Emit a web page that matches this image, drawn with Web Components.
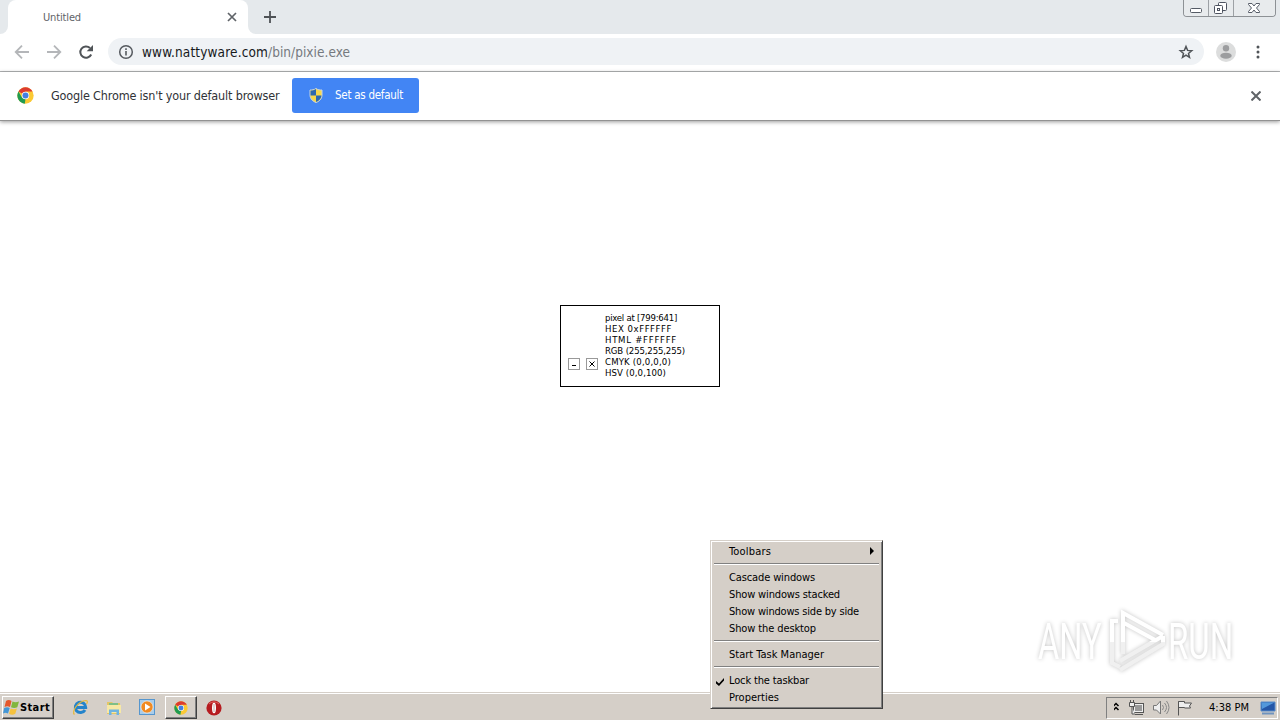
<!DOCTYPE html>
<html lang="en">
<head>
<meta charset="utf-8">
<title>Untitled</title>
<style>
    html, body { margin: 0; width: 1280px; height: 720px; overflow: hidden; background: #fff; }
    body { font-family: "DejaVu Sans Condensed", "DejaVu Sans", sans-serif; font-stretch: condensed; font-size: 11px; color: #000; }
    pixie-window { position: absolute; left: 560px; top: 305px; }
    context-menu { position: absolute; left: 710px; top: 540px; }
    any-run-mark { position: absolute; left: 1030px; top: 604px; }
</style>
</head>
<body>
<desk-top>
    <tab-strip><fit-text w="38">Untitled</fit-text></tab-strip>
    <tool-bar>
        <fit-text w="126" slot="host">www.nattyware.com</fit-text>
        <fit-text w="82" slot="path">/bin/pixie.exe</fit-text>
    </tool-bar>
    <info-bar>
        <fit-text w="228.5">Google Chrome isn't your default browser</fit-text>
        <fit-text w="68" slot="action">Set as default</fit-text>
    </info-bar>
    <page-view></page-view>
    <task-bar>
        <fit-text w="30" slot="start">Start</fit-text>
        <fit-text w="40" slot="clock">4:38 PM</fit-text>
    </task-bar>
</desk-top>
<pixie-window>
    <fit-text w="72">pixel at [799:641]</fit-text>
    <fit-text w="67">HEX 0xFFFFFF</fit-text>
    <fit-text w="72">HTML #FFFFFF</fit-text>
    <fit-text w="80">RGB (255,255,255)</fit-text>
    <fit-text w="66">CMYK (0,0,0,0)</fit-text>
    <fit-text w="61">HSV (0,0,100)</fit-text>
</pixie-window>
<any-run-mark></any-run-mark>
<context-menu>
    <menu-item submenu><fit-text w="42">Toolbars</fit-text></menu-item>
    <menu-line></menu-line>
    <menu-item><fit-text w="86">Cascade windows</fit-text></menu-item>
    <menu-item><fit-text w="111">Show windows stacked</fit-text></menu-item>
    <menu-item><fit-text w="130">Show windows side by side</fit-text></menu-item>
    <menu-item><fit-text w="87">Show the desktop</fit-text></menu-item>
    <menu-line></menu-line>
    <menu-item><fit-text w="95">Start Task Manager</fit-text></menu-item>
    <menu-line></menu-line>
    <menu-item checked><fit-text w="80">Lock the taskbar</fit-text></menu-item>
    <menu-item><fit-text w="50">Properties</fit-text></menu-item>
</context-menu>

<script>
// Every element here only needs a shadow root filled with its own markup
class Base extends HTMLElement {
    constructor() {
        super();
        const shadowRoot = this.attachShadow({mode: 'open'});
        shadowRoot.innerHTML = `<style>svg { display: block; flex: none; }</style>` + this.template();
    }
}

// Spreads its letters so the label takes exactly w pixels
class FitText extends Base {
    template() {
        return `<style>:host { display: inline-block; white-space: pre; flex: none; }</style><slot></slot>`;
    }
    connectedCallback() {
        const want = Number(this.getAttribute('w'));
        const count = this.textContent.length;
        const now = this.getBoundingClientRect().width;
        this.style.letterSpacing = ((want - now) / count) + 'px';
    }
}

class DeskTop extends Base {
    template() {
        return `
        <style>:host { display: flex; flex-direction: column; width: 1280px; height: 720px; background: #fff; }</style>
        <slot></slot>`;
    }
}

class ChromeLogo extends Base {
    template() {
        return `
        <style>:host { display: block; flex: none; width: 17px; height: 17px; }</style>
        <svg width="100%" height="100%" viewBox="0 0 48 48">
            <circle cx="24" cy="24" r="23" fill="#fbc934"/>
            <path d="M24 24L4.1 12.5A23 23 0 0 1 43.9 12.5H24z" fill="#dc3b30"/>
            <path d="M4.1 12.5L14 29.8L24 34L22 47A23 23 0 0 1 4.1 12.5z" fill="#209b51"/>
            <circle cx="24" cy="24" r="10.500" fill="#fff"/>
            <circle cx="24" cy="24" r="8.500" fill="#437fe0"/>
        </svg>`;
    }
}

class TabStrip extends Base {
    template() {
        return `
        <style>
            :host { display: flex; height: 34px; background: #e5e9ec; color: #5f6368; }
            .foot { width: 8px; background: #fff; }
            .foot i { display: block; height: 34px; background: #e5e9ec; }
            .left i { border-bottom-right-radius: 8px; }
            .right i { border-bottom-left-radius: 8px; }
            .tab { box-sizing: border-box; display: flex; align-items: center; width: 240px; padding: 0 11px 0 35px; background: #fff; border-radius: 8px 8px 0 0; justify-content: space-between; }
            .plus { margin: 10px 0 0 7px; }
            .caption { display: grid; grid-template-columns: 25px 25px 41px; box-sizing: border-box; width: 93px; height: 17px; margin: 0 4px 0 auto; border: 1px solid #8d9195; border-top: 0; border-radius: 0 0 4px 4px; overflow: hidden; }
            .caption span { display: flex; justify-content: center; border-right: 1px solid #9da1a5; background: #e8ebed; }
            .caption span:last-child { border: 0; }
        </style>
        <div class="foot left"><i></i></div>
        <div class="tab">
            <slot></slot>
            <svg width="10" height="10" viewBox="0 0 10 10" stroke="#5f6368" stroke-width="1.7"><path d="M1 1l8 8M9 1l-8 8"/></svg>
        </div>
        <div class="foot right"><i></i></div>
        <svg class="plus" width="14" height="14" viewBox="0 0 14 14" stroke="#4e5256" stroke-width="1.8"><path d="M7 1v12M1 7h12"/></svg>
        <div class="caption">
            <span><svg width="24" height="16" fill="#fff" stroke="#555b65"><rect x="6.5" y="8.5" width="11" height="4" rx="1"/></svg></span>
            <span><svg width="24" height="16" fill="#fff" stroke="#4d5360"><rect x="9.5" y="2.5" width="8" height="8" rx="1"/><rect x="5.5" y="5.5" width="8" height="8" rx="1"/><rect x="8.5" y="8.5" width="2" height="2"/></svg></span>
            <span><svg width="41" height="16" viewBox="0 0 41 16" fill="#fff" stroke="#575d68"><path d="M14.500 3.500h3.500l2 2.500 2-2.500h3.500v1l-3 3.500 3 3.500v1H22l-2-2.500-2 2.500h-3.500v-1l3-3.500-3-3.500z"/></svg></span>
        </div>`;
    }
}

class ToolBar extends Base {
    template() {
        return `
        <style>
            :host { box-sizing: border-box; display: flex; align-items: center; height: 38px; padding: 0 15px 2px 14px; background: #fff; border-bottom: 1px solid #b3b5b7; font-size: 13.500px; }
            .nav { margin-right: 16px; }
            .reload { margin-right: 14px; }
            .address { box-sizing: border-box; display: flex; align-items: center; width: 1096px; height: 27px; padding: 0 10px; border-radius: 14px; background: #eff2f5; color: #16191c; }
            .info { margin-right: 8px; }
            .path { color: #75797e; }
            .star { margin-left: auto; }
            .face { margin: 0 20px 0 12px; }
        </style>
        <svg class="nav" width="16" height="16" viewBox="0 0 16 16" fill="none" stroke="#b4b6b9" stroke-width="1.800"><path d="M15 8H2M8 1.700L1.700 8 8 14.300"/></svg>
        <svg class="nav" width="16" height="16" viewBox="0 0 16 16" fill="none" stroke="#b4b6b9" stroke-width="1.800"><path d="M1 8h13M8 1.700L14.300 8 8 14.300"/></svg>
        <svg class="reload" width="16" height="16" viewBox="0 0 16 16"><path d="M13.200 10.500A5.700 5.700 0 1 1 12 4" fill="none" stroke="#505458" stroke-width="2"/><path d="M15 1v6.300H8.700z" fill="#505458"/></svg>
        <div class="address">
            <svg class="info" width="16" height="16" viewBox="0 0 16 16"><circle cx="8" cy="8" r="6.300" fill="none" stroke="#565a5f" stroke-width="1.500"/><path d="M7.200 7h1.600v4.500H7.200zM7.200 4.300h1.600v1.600H7.200z" fill="#565a5f"/></svg>
            <slot name="host"></slot><span class="path"><slot name="path"></slot></span>
            <svg class="star" width="16" height="16" viewBox="0 0 16 16"><path d="M8 2.500l1.600 3.900 4.100.3-3.200 2.700 1 4L8 11.200l-3.500 2.200 1-4-3.200-2.700 4.100-.3z" fill="none" stroke="#505458" stroke-width="1.500"/></svg>
        </div>
        <svg class="face" width="20" height="20" viewBox="0 0 20 20"><circle cx="10" cy="10" r="10" fill="#dcdddd"/><circle cx="10" cy="6.200" r="3.200" fill="#9c9d9f"/><ellipse cx="10" cy="13.700" rx="5.700" ry="3" fill="#9c9d9f"/></svg>
        <svg width="4" height="16" viewBox="0 0 4 16" fill="#505458"><circle cx="2" cy="3" r="1.500"/><circle cx="2" cy="8" r="1.500"/><circle cx="2" cy="13" r="1.500"/></svg>`;
    }
}

class InfoBar extends Base {
    template() {
        return `
        <style>
            :host { box-sizing: border-box; display: flex; align-items: center; height: 49px; padding: 0 19px 1px 17px; background: #fff; border-bottom: 1px solid #929292; box-shadow: 0 1px 4px rgba(0,0,0,.4); color: #303236; font-size: 12.500px; z-index: 1; }
            chrome-logo { margin-right: 17px; }
            .button { box-sizing: border-box; display: flex; align-items: center; width: 127px; height: 35px; margin-left: 12.500px; padding-left: 17px; padding-bottom: 1px; background: #4285f4; border-radius: 3px; color: #fff; font-size: 11.500px; }
            .shield { margin: 1px 12px 0 0; }
            .close { margin-left: auto; }
        </style>
        <chrome-logo></chrome-logo>
        <slot></slot>
        <div class="button">
            <svg class="shield" width="14" height="15" viewBox="0 0 14 15">
                <path d="M7 .5C5 2 3 2 1 2v5c0 4 3 6.500 6 7.500 3-1 6-3.500 6-7.500V2c-2 0-4 0-6-1.500z" fill="#f7d84b" stroke="#c6d5e2"/>
                <path d="M7 1C5 2.300 3.500 2.500 1.500 2.500V7.500H7zM7 7.500h5.500c-.3 3.300-2.600 5.300-5.500 6.500z" fill="#2e69ae"/>
            </svg>
            <slot name="action"></slot>
        </div>
        <svg class="close" width="10" height="10" viewBox="0 0 10 10" stroke="#606468" stroke-width="2"><path d="M.5.5l9 9M9.500.5l-9 9"/></svg>`;
    }
}

class PageView extends Base {
    template() {
        return `<style>:host { display: block; flex: 1; background: #fff; }</style>`;
    }
}

class PixieWindow extends Base {
    template() {
        return `
        <style>
            :host { box-sizing: border-box; display: flex; width: 160px; height: 82px; border: 1px solid #000; background: #fff; font-size: 9.500px; line-height: 11px; }
            .buttons { display: flex; gap: 6px; padding: 52px 7px 0 7px; }
            .lines { display: flex; flex-direction: column; align-items: flex-start; padding-top: 6px; }
        </style>
        <div class="buttons">
            <svg width="12" height="12" fill="none" stroke="#999"><rect x=".5" y=".5" width="11" height="11"/><path d="M4 7.500h4" stroke="#000"/></svg>
            <svg width="12" height="12" fill="none" stroke="#999"><rect x=".5" y=".5" width="11" height="11"/><path d="M3.500 3.500l5 5M8.500 3.500l-5 5" stroke="#000"/></svg>
        </div>
        <div class="lines"><slot></slot></div>`;
    }
}

class ContextMenu extends Base {
    template() {
        return `
        <style>
            :host { box-sizing: border-box; display: flex; flex-direction: column; width: 173px; height: 169px; padding: 1px; background: #d5cfc8; border: 1px solid; border-color: #d5cfc8 #404040 #404040 #d5cfc8; box-shadow: inset 1px 1px #fff, inset -1px -1px #808080; }
            div { display: flex; flex-direction: column; padding: 1px; }
        </style>
        <div><slot></slot></div>`;
    }
}

class MenuItem extends Base {
    template() {
        return `
        <style>
            :host { display: flex; align-items: center; height: 17px; padding-right: 6px; line-height: 17px; }
            .gutter { width: 16px; flex: none; }
            .gutter svg, .arrow { visibility: hidden; }
            :host([checked]) .gutter svg, :host([submenu]) .arrow { visibility: visible; }
            .gutter svg { margin: 2px 0 0 3px; }
            .arrow { margin: 0 0 2px auto; }
        </style>
        <span class="gutter"><svg width="8" height="8"><path d="M0 3l3 2.500L8 0v2.500L3 8 0 5.500z"/></svg></span>
        <slot></slot>
        <svg class="arrow" width="4" height="8"><path d="M0 0l4 4-4 4z"/></svg>`;
    }
}

class MenuLine extends Base {
    template() {
        return `
        <style>
            :host { display: block; height: 9px; }
            i { display: block; height: 1px; border-top: 1px solid #808080; background: #fff; margin: 0 1px; transform: translateY(3px); }
        </style>
        <i></i>`;
    }
}

class TaskBar extends Base {
    template() {
        return `
        <style>
            :host { box-sizing: border-box; display: flex; align-items: center; height: 28px; padding: 2px 2px 0; background: #d5cfc8; border-top: 1px solid #d5cfc8; box-shadow: inset 0 1px #fff; }
            .raised { box-sizing: border-box; display: flex; align-items: center; height: 23px; border: 1px solid; border-color: #fff #404040 #404040 #fff; box-shadow: inset -1px -1px #808080; }
            .start { width: 52px; font-weight: bold; }
            .quick { display: flex; align-items: center; gap: 17px; margin: 0 9px 0 18px; }
            .app { width: 32px; justify-content: center; margin-right: 9px; }
            chrome-logo { width: 14px; height: 14px; }
            .tray { box-sizing: border-box; display: flex; align-items: center; width: 172px; height: 22px; margin-left: auto; padding: 0 1px 0 7px; border: 1px solid; border-color: #808080 #fff #fff #808080; }
            .status { margin-right: -7px; }
            .display { margin-left: auto; }
        </style>
        <div class="raised start">
            <svg width="17" height="17" viewBox="0 0 17 17">
                <path d="M3 2c2-1.500 4-1 5.500 0L7 8C5 7 3.500 7 1.500 8z" fill="#e4572c"/>
                <path d="M9.500 2.500c2 1 4 1 6.500 0l-1.700 5.700c-2 1-4.300 1-6.300 0z" fill="#81b63e"/>
                <path d="M1.200 9c2-1 3.800-1 5.500 0L5 14.500c-2-1-3.500-1-5 0z" fill="#4396d6"/>
                <path d="M7.700 9.500c2 1 4 1 6.200 0l-1.600 5.300c-2 1.200-4.300 1.200-6.300 0z" fill="#f6c23d"/>
            </svg>
            <slot name="start"></slot>
        </div>
        <div class="quick">
            <svg width="17" height="17" viewBox="0 0 17 17" fill="none">
                <path d="M13 11A5.200 5.200 0 1 1 13.700 8.500H4.500" stroke="#2484cb" stroke-width="3"/>
                <path d="M2.500 15.500C-1 13 6 2 14 1.500c2 0 1.500 2 .5 3.500" stroke="#e5b93c" stroke-width="1.200"/>
            </svg>
            <svg width="16" height="16" viewBox="0 0 16 16">
                <path d="M1 2h5l1 1h7v11H1z" fill="#e4c566"/><path d="M3 3h9v3H3z" fill="#7fbf86"/><path d="M1 5h14v8H1z" fill="#f7e8a5"/>
                <path d="M3 15V9.500h10V15h-2.500v-3h-5v3z" fill="#70b4e0"/>
            </svg>
            <svg width="17" height="17" viewBox="0 0 17 17">
                <rect x=".5" y=".5" width="15" height="15" fill="#a9cdea" stroke="#5696ce"/><circle cx="8" cy="8" r="6" fill="#f08a22" stroke="#fff" stroke-width=".5"/><path d="M6 4.500v7L11.500 8z" fill="#fff"/>
            </svg>
        </div>
        <div class="raised app"><chrome-logo></chrome-logo></div>
        <svg width="16" height="16" viewBox="0 0 16 16"><circle cx="8" cy="8" r="7.600" fill="#b61c20"/><path d="M3 4a7 7 0 0 1 10 0" stroke="#e46a64" fill="none"/><ellipse cx="8" cy="8" rx="2" ry="5.300" fill="#fff"/><path d="M8 4v8" stroke="#c6aaa5"/></svg>
        <div class="tray">
            <svg class="status" width="102" height="20" viewBox="0 0 102 20">
                <path d="M-.5 8L2 5.500 4.500 8M-.5 12L2 9.500 4.500 12" fill="none" stroke="#000" stroke-width="1.500"/>
                <g fill="#eee" stroke="#555">
                    <rect x="19.500" y="5.500" width="10" height="9"/><path d="M21 16.500h8" fill="none"/><path d="M21 7h7v6h-7z" fill="#999" stroke="none"/>
                    <path d="M15.500 4.500h5v4h-5zM16.500 2v2M19.500 2v2M18 9v7h3"/>
                    <path d="M39.500 7.500h3l4-4.500v13l-4-4h-3z" stroke="#777"/>
                    <path d="M48.500 7q2 2.500 0 5M50.500 5q4 4.500 0 9M52.500 3q5 6.500 0 13" fill="none" stroke="#888"/>
                    <path d="M64.500 3.500v14M64.500 3.500h6v1.500h7l-2 3 1 2h-6V9.500h-6z"/>
                </g>
            </svg>
            <slot name="clock"></slot>
            <svg class="display" width="16" height="15" viewBox="0 0 16 15"><path d="M1 2h14v9H1z" fill="#2456a7" stroke="#588bc8"/><path d="M1.500 2.500h13L2 9z" fill="#5398db"/><path d="M2 13.500h12" stroke="#6f93be" stroke-width="2"/></svg>
        </div>`;
    }
}

class AnyRunMark extends Base {
    template() {
        return `
        <style>
            :host { display: block; width: 230px; height: 76px; }
            svg { filter: drop-shadow(0 0 2px rgba(0,0,0,.24)); }
            text { font-family: Roboto, sans-serif; font-size: 50px; font-weight: 400; font-stretch: normal; }
        </style>
        <svg width="230" height="76" viewBox="0 0 230 76">
            <defs>
                <linearGradient id="g" x1="0" y1="18" x2="0" y2="56" gradientUnits="userSpaceOnUse">
                    <stop offset=".52" stop-color="#fff"/><stop offset=".54" stop-color="#f0f0f0"/>
                </linearGradient>
            </defs>
            <g fill="url(#g)">
                <text transform="translate(8 55) scale(.65 1)">ANY</text>
                <text transform="translate(138 55) scale(.66 1)">RUN</text>
            </g>
            <g fill="none" stroke="url(#g)" stroke-width="4">
                <path d="M93 50V9l40 22M88 17h-6v42l8 4"/>
                <path d="M94 19l33 18M90 57l43-25M90 66l43-26v-8"/>
            </g>
        </svg>`;
    }
}

// Containers first, labels last, so a label is measured with its final font
customElements.define('desk-top', DeskTop);
customElements.define('chrome-logo', ChromeLogo);
customElements.define('tab-strip', TabStrip);
customElements.define('tool-bar', ToolBar);
customElements.define('info-bar', InfoBar);
customElements.define('page-view', PageView);
customElements.define('pixie-window', PixieWindow);
customElements.define('context-menu', ContextMenu);
customElements.define('menu-item', MenuItem);
customElements.define('menu-line', MenuLine);
customElements.define('task-bar', TaskBar);
customElements.define('any-run-mark', AnyRunMark);
customElements.define('fit-text', FitText);
</script>
</body>
</html>
